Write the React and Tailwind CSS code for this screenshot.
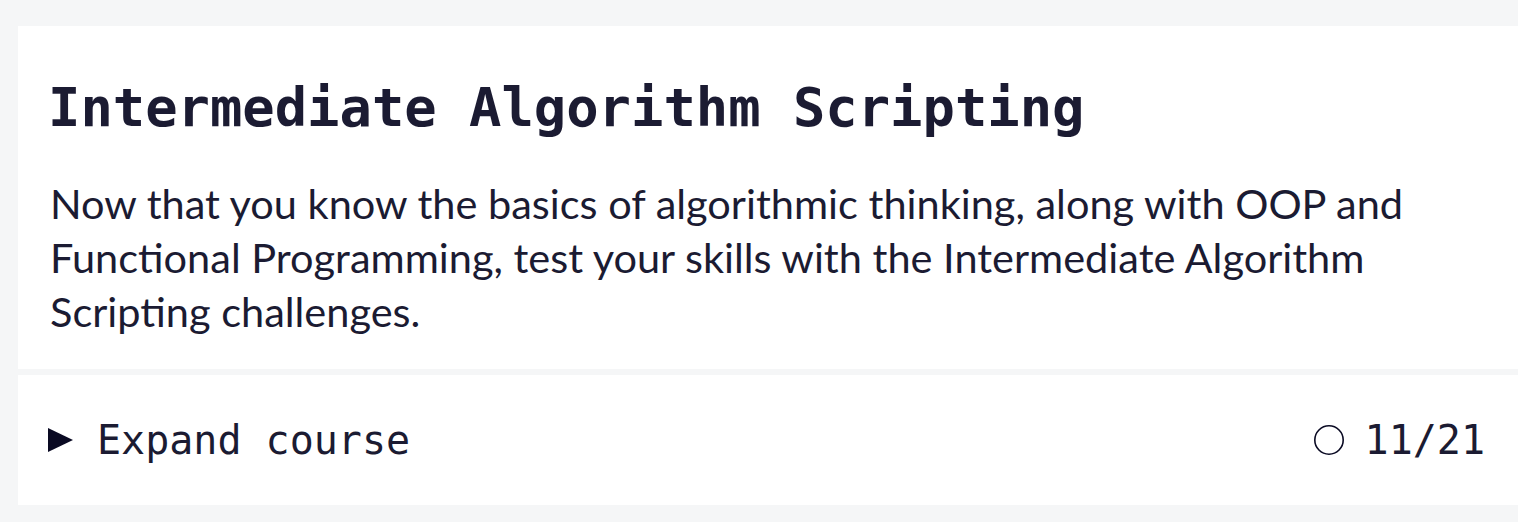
import React from 'react'

const mono = { fontFamily: '"DejaVu Sans Mono", "Liberation Mono", monospace' }

function ProgressRing() {
  return (
    <svg width="32" height="32" viewBox="0 0 32 32" className="shrink-0">
      <circle cx="16" cy="16" r="14.2" fill="none" stroke="#0a0a23" strokeWidth="1.6" />
    </svg>
  )
}

function CaretRight() {
  return (
    <svg width="26" height="26" viewBox="0 0 26 26" className="shrink-0">
      <polygon points="0,1 25,13 0,25" fill="#0a0a23" />
    </svg>
  )
}

export default function App() {
  return (
    <div className="min-h-[522px] bg-[#f5f6f7] pt-[26px] pb-[17px] pl-[18px]">
      <div className="flex flex-col gap-[6px]">
        {/* intro */}
        <div className="bg-white px-[32px] pt-[49px] pb-[31px]">
          <h2
            className="-ml-[2px] text-[53.8px] leading-[65px] font-bold text-[#1b1b32]"
            style={mono}
          >
            Intermediate Algorithm Scripting
          </h2>
          <p
            className="mt-[36px] text-[41.5px] leading-[54px] text-[#1b1b32]"
            style={{ fontFamily: 'Lato, "Noto Sans", sans-serif' }}
          >
            Now that you know the basics of algorithmic thinking, along with OOP and
            Functional Programming, test your skills with the Intermediate Algorithm
            Scripting challenges.
          </p>
        </div>

        {/* expand bar */}
        <div className="bg-white h-[130px] pl-[30px] pr-[33px] flex items-center justify-between">
          <button className="flex items-center gap-[23px] text-[40px] text-[#1b1b32]" style={mono}>
            <CaretRight />
            <span>Expand course</span>
          </button>
          <div className="flex items-center gap-[20px] text-[40px] text-[#1b1b32]" style={mono}>
            <ProgressRing />
            <span>11/21</span>
          </div>
        </div>
      </div>
    </div>
  )
}
